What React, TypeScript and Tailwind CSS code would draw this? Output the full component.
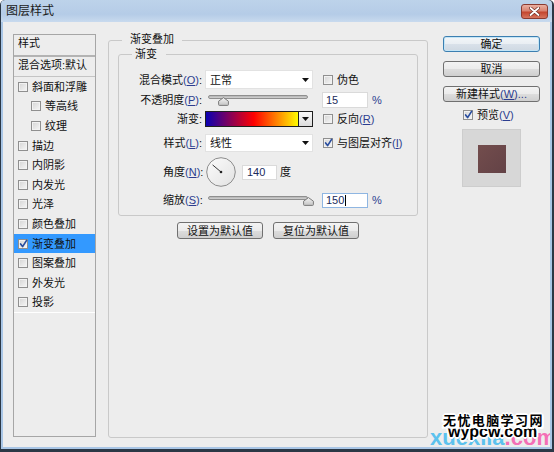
import React from "react";

const M = ({ c }: { c: string }) => (
  <span className="text-[#2c3d8f]">
    (<span className="underline underline-offset-[1px]">{c}</span>)
  </span>
);

function CheckBox({ checked = false }: { checked?: boolean }) {
  return (
    <span className="relative flex h-[10px] w-[10px] shrink-0 border border-[#8f8f8f] bg-[linear-gradient(135deg,#d4d4d4,#f7f7f7)] shadow-[inset_0_0_0_1px_#f2f2f2]">
      {checked ? (
        <svg className="absolute left-[0px] top-[-1px]" width="9" height="10" viewBox="0 0 9 10">
          <path d="M1.6 5 L3.6 7.6 L7.6 1.4" fill="none" stroke="#2a4e9f" strokeWidth="1.7" strokeLinecap="round" strokeLinejoin="round" />
        </svg>
      ) : null}
    </span>
  );
}

const Arrow = () => (
  <svg width="7" height="4" viewBox="0 0 7 4">
    <path d="M0 0H7L3.5 4Z" fill="#111" />
  </svg>
);

const Thumb = () => (
  <svg width="11" height="9" viewBox="0 0 11 9">
    <defs>
      <linearGradient id="tg" x1="0" y1="0" x2="0" y2="1">
        <stop offset="0" stopColor="#f6f6f6" />
        <stop offset="1" stopColor="#c2c2c2" />
      </linearGradient>
    </defs>
    <path d="M5.5 0.6 L10.4 4.2 V7.6 Q10.4 8.4 9.6 8.4 H1.4 Q0.6 8.4 0.6 7.6 V4.2 Z" fill="url(#tg)" stroke="#7b7b7b" strokeWidth="1" />
  </svg>
);

function Slider({ thumbClass }: { thumbClass: string }) {
  return (
    <div className="relative h-full w-[108px]">
      <div className="absolute left-[3px] top-[3px] h-[4px] w-[100px] rounded-full border border-[#8f8f8f] bg-[linear-gradient(#b4b4b4,#d2d2d2)]" />
      <div className={thumbClass}>
        <Thumb />
      </div>
    </div>
  );
}

function Dial() {
  return (
    <svg width="30" height="30" viewBox="0 0 30 30">
      <defs>
        <linearGradient id="dg" x1="0" y1="0" x2="1" y2="1">
          <stop offset="0" stopColor="#fbfbfb" />
          <stop offset="1" stopColor="#e2e2e2" />
        </linearGradient>
      </defs>
      <circle cx="15" cy="15" r="14.3" fill="url(#dg)" stroke="#8c8c8c" strokeWidth="1" />
      <line x1="15" y1="15" x2="6.6" y2="7.9" stroke="#3a3a3a" strokeWidth="1" />
      <circle cx="15" cy="15" r="1.3" fill="#222" />
    </svg>
  );
}

const Btn = ({ children, def = false, w }: { children: React.ReactNode; def?: boolean; w: string }) => (
  <div
    className={
      def
        ? "flex h-[16px] items-center justify-center rounded-[3px] border border-[#3c7fb1] bg-[linear-gradient(#f3f6f9,#e9eef3_50%,#d9e1ea_51%,#cfd8e2)] shadow-[inset_0_0_0_1px_#c4e5f6] " + w
        : "flex h-[16px] items-center justify-center rounded-[3px] border border-[#707070] bg-[linear-gradient(#f3f3f3,#ebebeb_50%,#dddddd_51%,#cfcfcf)] " + w
    }
  >
    {children}
  </div>
);

const items: { t: string; indent?: boolean; checked?: boolean; sel?: boolean }[] = [
  { t: "斜面和浮雕" },
  { t: "等高线", indent: true },
  { t: "纹理", indent: true },
  { t: "描边" },
  { t: "内阴影" },
  { t: "内发光" },
  { t: "光泽" },
  { t: "颜色叠加" },
  { t: "渐变叠加", checked: true, sel: true },
  { t: "图案叠加" },
  { t: "外发光" },
  { t: "投影" },
];

export default function App() {
  return (
    <div className="flex h-[452px] w-[554px] flex-col overflow-hidden rounded-t-[5px] bg-[#2b3846] pb-[3px] pl-[1px] pr-[2px] font-['Liberation_Sans','Noto_Sans_CJK_SC',sans-serif] text-[11px] leading-[14px] text-[#111]">
      {/* Title bar */}
      <div className="flex h-[22px] shrink-0 items-center justify-between rounded-t-[4px] bg-[linear-gradient(#bdd3ea,#b5cce7_65%,#c8daee)] pl-[5px]">
        <span className="text-[12px] text-[#1a1a1a]">图层样式</span>
        <div className="mr-[4px] flex h-[15px] w-[27px] items-center justify-center rounded-[3px] border border-[#8a3a30] bg-[linear-gradient(#eab0a2,#d98371_45%,#c4462f_55%,#d6745e)]">
          <svg width="11" height="9" viewBox="0 0 11 9">
            <path d="M1.5 1 L9.5 8 M9.5 1 L1.5 8" stroke="#6b2a22" strokeWidth="3.2" strokeLinecap="round" />
            <path d="M1.5 1 L9.5 8 M9.5 1 L1.5 8" stroke="#ffffff" strokeWidth="1.8" strokeLinecap="round" />
          </svg>
        </div>
      </div>

      {/* Body */}
      <div className="relative flex flex-1 items-start overflow-hidden border-x-2 border-b-2 border-[#a9c6e6] bg-[#ededed]">
        {/* Left list */}
        <div className="ml-[10px] mt-[12px] flex h-[403px] w-[83px] shrink-0 flex-col border border-[#a6a6a6]">
          <div className="h-[20px] pl-[4px]">
            <div className="leading-[16px]">样式</div>
          </div>
          <div className="h-[2px] bg-[#b3b3b3]" />
          <div className="h-[19px] pl-[4px] pt-[1px]">
            <div className="whitespace-nowrap leading-[15px]">混合选项:默认</div>
          </div>
          <div className="h-[1px] bg-[#c4c4c4]" />
          {items.map((it) => (
            <div
              key={it.t}
              className={
                (it.sel ? "bg-[#3399ff] " : "") +
                (it.indent ? "pl-[17px] " : "pl-[4px] ") +
                "flex h-[19.6px] items-center gap-[4px] whitespace-nowrap"
              }
            >
              <CheckBox checked={it.checked} />
              <span>{it.t}</span>
            </div>
          ))}
          <div className="h-[1px] bg-white" />
        </div>

        {/* Main group */}
        <fieldset className="ml-[12px] mt-[11px] h-[405px] w-[320px] shrink-0 rounded-[3px] border border-[#c9c9c9] px-[9px]">
          <legend className="ml-[4px] h-[14px] px-[8px] leading-[12px]">渐变叠加</legend>
          <fieldset className="h-[169px] rounded-[3px] border border-[#c9c9c9]">
            <legend className="ml-[13px] h-[14px] pl-[3px] pr-[9px] leading-[15px]">渐变</legend>

            {/* Row 1 */}
            <div className="mt-[9px] flex h-[19px] items-center">
              <div className="w-[83px] whitespace-nowrap text-right">
                混合模式<M c="O" />:
              </div>
              <div className="ml-[3px] flex h-[19px] w-[108px] items-center justify-between border border-[#e2e2e2] bg-white pl-[4px] pr-[3px]">
                <span>正常</span>
                <Arrow />
              </div>
              <div className="ml-[10px] flex items-center gap-[4px]">
                <CheckBox />
                <span>伪色</span>
              </div>
            </div>

            {/* Row 2 */}
            <div className="mt-[3px] flex h-[16px] items-center">
              <div className="w-[83px] whitespace-nowrap text-right">
                不透明度<M c="P" />:
              </div>
              <div className="ml-[3px] h-[16px]">
                <Slider thumbClass="absolute left-[13px] top-[5px] flex" />
              </div>
              <div className="ml-[9px] flex h-[16px] w-[46px] items-center border border-[#dadada] bg-white pl-[3px] text-[#1c2b5c]">
                15
              </div>
              <span className="ml-[4px] text-[#2c3d8f]">%</span>
            </div>

            {/* Row 3 */}
            <div className="mt-[3px] flex h-[16px] items-center">
              <div className="w-[83px] whitespace-nowrap text-right">渐变:</div>
              <div className="ml-[3px] flex h-[16px] w-[108px]">
                <div className="h-full w-[94px] border border-[#1e1e1e] bg-[linear-gradient(to_right,#0a00b2,#ff0000_52%,#fffc00)]" />
                <div className="ml-[-1px] flex h-full w-[15px] items-center justify-center border border-[#1e1e1e] bg-[linear-gradient(#fafafa,#dcdcdc)]">
                  <Arrow />
                </div>
              </div>
              <div className="ml-[10px] flex items-center gap-[4px]">
                <CheckBox />
                <span>
                  反向<M c="R" />
                </span>
              </div>
            </div>

            {/* Row 4 */}
            <div className="mt-[7px] flex h-[18px] items-center">
              <div className="w-[83px] whitespace-nowrap text-right">
                样式<M c="L" />:
              </div>
              <div className="ml-[3px] flex h-[18px] w-[108px] items-center justify-between border border-[#e2e2e2] bg-white pl-[4px] pr-[3px]">
                <span>线性</span>
                <Arrow />
              </div>
              <div className="ml-[10px] flex items-center gap-[4px]">
                <CheckBox checked />
                <span className="whitespace-nowrap">
                  与图层对齐<M c="I" />
                </span>
              </div>
            </div>

            {/* Row 5 */}
            <div className="mt-[5px] flex h-[30px] items-center">
              <div className="ml-[44px] w-[43px] whitespace-nowrap">
                角度<M c="N" />:
              </div>
              <Dial />
              <div className="ml-[6px] flex h-[15px] w-[35px] items-center border border-[#dadada] bg-white pl-[4px] text-[#1c2b5c]">
                140
              </div>
              <span className="ml-[3px]">度</span>
            </div>

            {/* Row 6 */}
            <div className="mt-[6px] flex h-[14px] items-center">
              <div className="ml-[44px] w-[42px] whitespace-nowrap">
                缩放<M c="S" />:
              </div>
              <div className="h-[14px]">
                <Slider thumbClass="absolute left-[98px] top-[4px] flex" />
              </div>
              <div className="ml-[9px] flex h-[15px] w-[46px] items-center border border-[#8fb6e2] bg-white pl-[3px] text-[#1c2b5c]">
                150
                <span className="ml-[1px] h-[11px] w-[1px] bg-black" />
              </div>
              <span className="ml-[4px] text-[#2c3d8f]">%</span>
            </div>
          </fieldset>

          <div className="mt-[6px] flex justify-center gap-[10px]">
            <Btn w="w-[86px] h-[17px]">设置为默认值</Btn>
            <Btn w="w-[86px] h-[17px]">复位为默认值</Btn>
          </div>
        </fieldset>

        {/* Right column */}
        <div className="ml-[15px] mt-[14px] flex w-[97px] shrink-0 flex-col">
          <Btn def w="w-[97px]">确定</Btn>
          <div className="mt-[9px]">
            <Btn w="w-[97px]">取消</Btn>
          </div>
          <div className="mt-[9px]">
            <Btn w="w-[97px]">
              <span className="whitespace-nowrap">
                新建样式<span className="text-[#2c3d8f]">(<span className="underline">W</span>)...</span>
              </span>
            </Btn>
          </div>
          <div className="mt-[7px] flex h-[12px] items-center gap-[4px] pl-[20px]">
            <CheckBox checked />
            <span>
              预览<M c="V" />
            </span>
          </div>
          <div className="ml-[19px] mt-[8px] flex h-[58px] w-[59px] items-center justify-center border border-[#cdcdcd] bg-[#d7d7d7]">
            <div className="mt-[2px] h-[28px] w-[28px] bg-[linear-gradient(135deg,#734d4d,#634246)]" />
          </div>
        </div>

        {/* Watermark */}
        <div className="absolute left-[427px] top-[405px] whitespace-nowrap text-[22px] font-bold leading-[22px]">
          <span className="text-[#5cc2ee]">xuexila</span>
          <span className="text-[#f46fb6]">.com</span>
        </div>
        <div className="absolute left-[445px] top-[402px] whitespace-nowrap text-[16px] font-bold leading-[16px] text-black [text-shadow:2px_0_0_#fff,-2px_0_0_#fff,0_2px_0_#fff,0_-2px_0_#fff,1px_1px_0_#fff,-1px_-1px_0_#fff,1px_-1px_0_#fff,-1px_1px_0_#fff]">
          wypcw.com
        </div>
        <div className="absolute left-[440px] top-[392px] whitespace-nowrap text-[13px] font-bold leading-[14px] tracking-[1.4px] text-black [text-shadow:2px_0_0_#fff,-2px_0_0_#fff,0_2px_0_#fff,0_-2px_0_#fff,1px_1px_0_#fff,-1px_-1px_0_#fff,1px_-1px_0_#fff,-1px_1px_0_#fff,2px_2px_0_#fff,-2px_2px_0_#fff]">
          无忧电脑学习网
        </div>
      </div>
    </div>
  );
}
